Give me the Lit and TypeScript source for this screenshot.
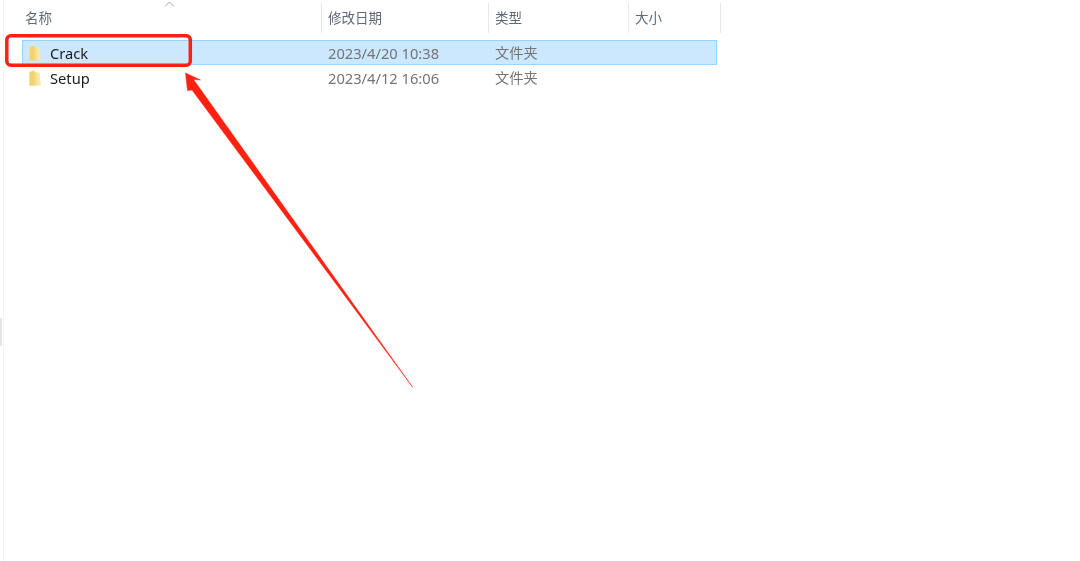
import { LitElement, html, css, svg } from "lit";
import { customElement } from "lit/decorators.js";

const folder = svg`<svg class="folder" width="12" height="16" viewBox="0 0 12 16">
  <path d="M0.5 2 L5 0.5 L6 2.5 L10.5 2.5 L11.8 14.5 L11.8 15.5 L0.5 15.5 Z" fill="#fbe7a6"/>
  <path d="M0.5 2 L5 0.5 L5.8 2.5 L5.8 15.5 L0.5 15.5 Z" fill="#f3d272"/>
  <path d="M5.8 2.5 L8 2.5 L8 15.5 L5.8 15.5 Z" fill="#f8dd8c"/>
</svg>`;

const rows = [
  { name: "Crack", date: "2023/4/20 10:38", type: "文件夹", selected: true },
  { name: "Setup", date: "2023/4/12 16:06", type: "文件夹", selected: false },
];

@customElement("app-root")
export class AppRoot extends LitElement {
  static styles = css`
    :host {
      display: block;
      width: 1080px;
      height: 561px;
      position: relative;
      overflow: hidden;
      background: #fff;
      font-family: "Noto Sans", "Noto Sans CJK SC", sans-serif;
      font-size: 14.7px;
    }
    .pane {
      margin-left: 3px;
      height: 561px;
      box-sizing: border-box;
      border-left: 1px solid #f3f3f3;
      padding-top: 3px;
      filter: blur(0.3px);
    }
    .header {
      display: grid;
      grid-template-columns: 318px 167px 140px 92px;
      height: 30px;
    }
    .hcell {
      position: relative;
      border-right: 1px solid #e8e8e8;
      color: #5f6a78;
      font-size: 13.5px;
      line-height: 30px;
      padding-left: 6px;
    }
    .hcell:first-child { padding-left: 21px; }
    .sort {
      position: absolute;
      left: 160px;
      top: -3px;
    }
    .rows {
      margin: 7px 0 0 18px;
      width: 695px;
    }
    .row {
      display: grid;
      grid-template-columns: 305px 167px 1fr;
      height: 25px;
      box-sizing: border-box;
      align-items: center;
      border: 1px solid transparent;
    }
    .row.sel {
      background: #cce8ff;
      border-color: #99d1ff;
    }
    .name {
      display: flex;
      align-items: center;
      gap: 9px;
      padding-left: 6px;
      color: #1d1d1d;
    }
    .folder { flex: none; }
    .date, .type { color: #747474; }
    .type { font-size: 14.2px; padding-bottom: 2px; }
    .thumb {
      position: absolute;
      left: 0;
      top: 318px;
      width: 2px;
      height: 28px;
      background: #e4e4e4;
    }
    .mark {
      position: absolute;
      left: 0;
      top: 0;
      pointer-events: none;
    }
  `;

  render() {
    return html`
      <div class="pane">
        <div class="header">
          <div class="hcell">名称
            <svg class="sort" width="12" height="8" viewBox="0 0 12 8"><path d="M1 6.5 L5.5 2 L10 6.5" fill="none" stroke="#a8a8a8" stroke-width="1"/></svg>
          </div>
          <div class="hcell">修改日期</div>
          <div class="hcell">类型</div>
          <div class="hcell">大小</div>
        </div>
        <div class="rows">
          ${rows.map(
            (r) => html`
              <div class="row ${r.selected ? "sel" : ""}">
                <div class="name">${folder}<span>${r.name}</span></div>
                <div class="date">${r.date}</div>
                <div class="type">${r.type}</div>
              </div>
            `
          )}
        </div>
      </div>
      <div class="thumb"></div>
      <svg class="mark" width="1080" height="561" viewBox="0 0 1080 561">
        <rect x="6.8" y="35.8" width="183.5" height="29.5" rx="4" fill="none" stroke="#ff1f14" stroke-width="3.5"/>
        <path d="M412.5 387 L193.5 79.5 L200.5 80 L185.5 73 L187.5 90.5 L192 90 Z" fill="#ff2010" stroke="#ff2010" stroke-width="0.5" stroke-linejoin="round"/>
      </svg>
    `;
  }
}
